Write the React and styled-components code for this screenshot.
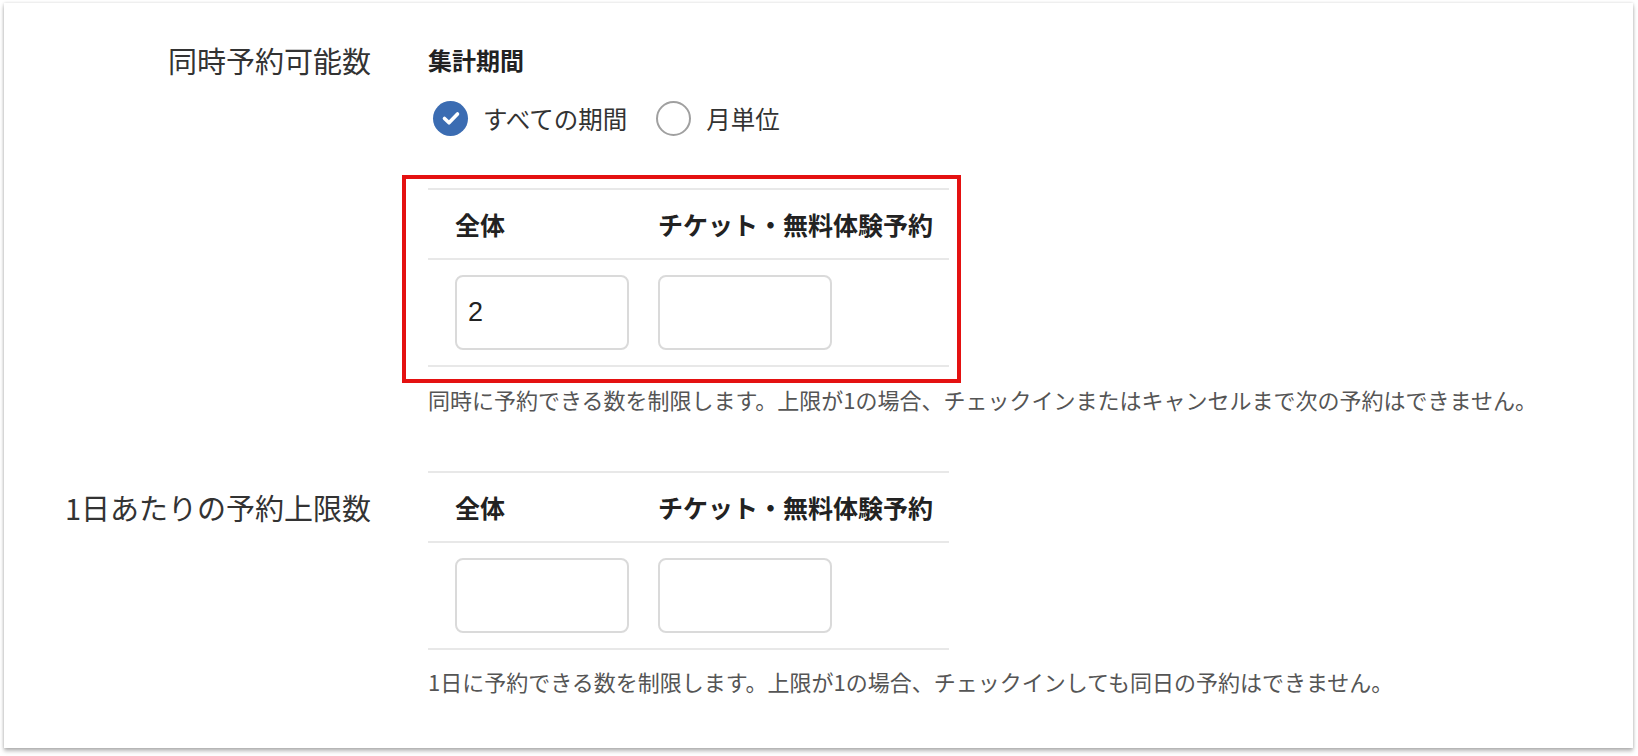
import React from 'react';
import styled, { createGlobalStyle } from 'styled-components';

const GlobalStyle = createGlobalStyle`
  html, body {
    margin: 0;
    padding: 0;
    background: #ffffff;
  }
  body {
    font-family: "Noto Sans CJK JP", "Noto Sans", sans-serif;
    color: #333333;
  }
`;

const Card = styled.div`
  margin: 3px 5px 8px 4px;
  padding: 39px 0 52px 0;
  background: #ffffff;
  box-shadow: 0 3px 4px rgba(0, 0, 0, 0.28), 0 0 3px rgba(0, 0, 0, 0.14);
  display: flex;
  flex-direction: column;
  gap: 57px;
`;

const Section = styled.section`
  display: grid;
  grid-template-columns: 367px 1fr;
  column-gap: 57px;
  align-items: start;
`;

const Label = styled.div`
  text-align: right;
  font-size: 29px;
  line-height: 36px;
  color: #333333;
  white-space: nowrap;
  padding-top: ${props => props.$offset || 0}px;
`;

const Content = styled.div`
  display: flex;
  flex-direction: column;
  align-items: flex-start;
`;

const GroupTitle = styled.div`
  font-size: 24px;
  line-height: 36px;
  font-weight: 700;
  color: #222222;
`;

const RadioRow = styled.div`
  display: flex;
  align-items: center;
  margin-top: 22px;
  padding-left: 5px;
  height: 36px;
`;

const RadioOption = styled.label`
  display: flex;
  align-items: center;
  gap: 15px;
  font-size: 24.5px;
  color: #333333;
  margin-right: 29px;
`;

const RadioCircle = styled.span`
  width: 35px;
  height: 35px;
  border-radius: 50%;
  box-sizing: border-box;
  display: flex;
  align-items: center;
  justify-content: center;
  background: ${props => (props.$checked ? '#3b6cb2' : '#ffffff')};
  border: ${props => (props.$checked ? 'none' : '2.5px solid #a0a0a0')};
`;

const TableWrap = styled.div`
  position: relative;
  width: 521px;
  margin-top: ${props => props.$top || 0}px;

  &::after {
    content: '';
    display: ${props => (props.$highlighted ? 'block' : 'none')};
    position: absolute;
    top: -13px;
    left: -26px;
    right: -12px;
    bottom: -16px;
    border: 4px solid #e41111;
    pointer-events: none;
  }
`;

const Row = styled.div`
  display: flex;
  gap: 29px;
  padding-left: 27px;
  border-top: 2px solid #e8e8e8;
  ${props => props.$last && 'border-bottom: 2px solid #e8e8e8;'}
  align-items: center;
  height: ${props => props.$height}px;
`;

const HeadCell = styled.div`
  width: 174px;
  font-size: 25px;
  font-weight: 700;
  color: #222222;
  white-space: nowrap;
`;

const NumberInput = styled.input`
  width: 174px;
  height: 75px;
  box-sizing: border-box;
  border: 2px solid #dadada;
  border-radius: 8px;
  padding: 0 11px;
  font-family: "Liberation Sans", Arial, sans-serif;
  font-size: 27px;
  color: #222222;
  background: #ffffff;
  outline: none;
`;

const Hint = styled.p`
  margin: ${props => props.$top}px 0 0 0;
  font-size: 22px;
  line-height: 30px;
  color: #555555;
  white-space: nowrap;
`;

const CheckIcon = () => (
  <svg width="24" height="24" viewBox="0 0 24 24">
    <path d="M5.5 12.5 L10 16.8 L18.5 8" fill="none" stroke="#ffffff" strokeWidth="3.6" strokeLinecap="round" strokeLinejoin="round" />
  </svg>
);

const Radio = ({ checked, children }) => (
  <RadioOption>
    <RadioCircle $checked={checked}>{checked && <CheckIcon />}</RadioCircle>
    {children}
  </RadioOption>
);

const LimitTable = ({ values, highlighted, top }) => (
  <TableWrap $highlighted={highlighted} $top={top}>
    <Row $height={68}>
      <HeadCell>全体</HeadCell>
      <HeadCell>チケット・無料体験予約</HeadCell>
    </Row>
    <Row $height={105} $last>
      {values.map((v, i) => (
        <NumberInput key={i} type="text" defaultValue={v} />
      ))}
    </Row>
  </TableWrap>
);

const App = () => {
  return (
    <>
      <GlobalStyle />
      <Card>
        <Section>
          <Label>同時予約可能数</Label>
          <Content>
            <GroupTitle>集計期間</GroupTitle>
            <RadioRow>
              <Radio checked>すべての期間</Radio>
              <Radio>月単位</Radio>
            </RadioRow>
            <LimitTable values={['2', '']} highlighted top={52} />
            <Hint $top={17}>同時に予約できる数を制限します。上限が1の場合、チェックインまたはキャンセルまで次の予約はできません。</Hint>
          </Content>
        </Section>
        <Section>
          <Label $offset={18}>1日あたりの予約上限数</Label>
          <Content>
            <LimitTable values={['', '']} />
            <Hint $top={16}>1日に予約できる数を制限します。上限が1の場合、チェックインしても同日の予約はできません。</Hint>
          </Content>
        </Section>
      </Card>
    </>
  );
};

export default App;
